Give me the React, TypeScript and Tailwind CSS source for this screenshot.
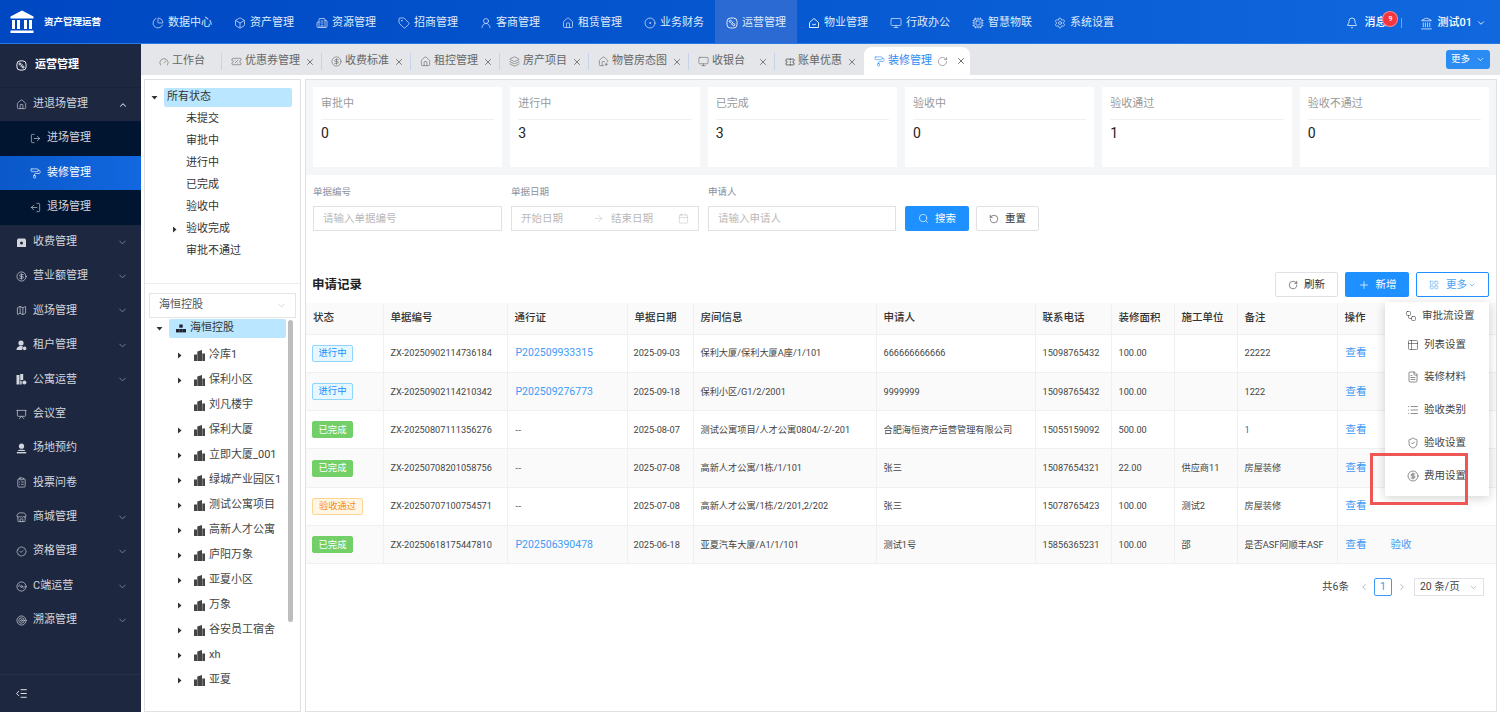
import React from "react";
import {
  ChartPie, Box, Building2, Tag, UserRound, House, CircleDot, Monitor, Cpu, Settings,
  Bell, Landmark, ChevronDown, ChevronUp, X, Gauge, TicketPercent, CircleDollarSign, Layers, HousePlus,
  Ticket, PaintRoller, RotateCw, Calendar, Search, RotateCcw, Plus, LayoutGrid, Workflow, Table2, FileText,
  List, ShieldCheck, CircleDollarSign as Coin, ChevronLeft, ChevronRight, LogOut, Map,
  Presentation, ClipboardList, Store, BadgeCheck, Disc3, Target, IndentDecrease, ArrowRight,
} from "lucide-react";

const Ops = ({ size = 12 }: { size?: number; strokeWidth?: number }) => (
  <svg width={size} height={size} viewBox="0 0 12 12" fill="none" stroke="currentColor" strokeWidth="1" className="shrink-0">
    <rect x="1" y="1" width="10" height="10" rx="3.5" />
    <circle cx="4.3" cy="4.3" r="1.1" /><circle cx="7.7" cy="7.7" r="1.1" /><path d="M5.2 7.6 L7 4.6" />
  </svg>
);
const Prop = ({ size = 12 }: { size?: number; strokeWidth?: number }) => (
  <svg width={size} height={size} viewBox="0 0 12 12" fill="none" stroke="currentColor" strokeWidth="1" className="shrink-0">
    <path d="M1.5 5.5 L6 1.5 L10.5 5.5 V10.5 H1.5 Z" strokeLinejoin="round" /><path d="M4 7 Q6 9 8 7" />
  </svg>
);
const Wallet = ({ size = 11 }: { size?: number; strokeWidth?: number }) => (
  <svg width={size} height={size} viewBox="0 0 11 11" className="shrink-0 fill-current">
    <path fillRule="evenodd" d="M2 1.5h7l1 1.5V9.5a.5.5 0 0 1-.5.5h-8a.5.5 0 0 1-.5-.5V3zM5.5 4.5a1.5 1.5 0 1 0 0 3 1.5 1.5 0 0 0 0-3z" />
  </svg>
);
const Person = ({ size = 11 }: { size?: number; strokeWidth?: number }) => (
  <svg width={size} height={size} viewBox="0 0 11 11" className="shrink-0 fill-current">
    <circle cx="5" cy="3" r="2.6" /><path d="M0.5 10 C0.5 7 3 6 5 6 C6 6 6.5 6.2 7 6.5 L6 10Z" /><circle cx="8.6" cy="8.4" r="1.8" />
  </svg>
);
const Flats = ({ size = 11 }: { size?: number; strokeWidth?: number }) => (
  <svg width={size} height={size} viewBox="0 0 11 11" className="shrink-0 fill-current">
    <path d="M0.5 1h3v9.5h-3zM4.2 0h3v6h-3zM4.2 6.8h1.5v3.7H4.2z" /><circle cx="8.4" cy="8.4" r="2" />
  </svg>
);
const Venue = ({ size = 11 }: { size?: number; strokeWidth?: number }) => (
  <svg width={size} height={size} viewBox="0 0 11 11" className="shrink-0 fill-current">
    <circle cx="5.5" cy="3.2" r="2.6" /><path d="M1.5 8 C2 6.3 9 6.3 9.5 8Z" /><rect x="0.8" y="9" width="9.4" height="1.4" />
  </svg>
);

const navs: [string, any][] = [
  ["数据中心", ChartPie], ["资产管理", Box], ["资源管理", Building2], ["招商管理", Tag], ["客商管理", UserRound], ["租赁管理", House],
  ["业务财务", CircleDot], ["运营管理", Ops], ["物业管理", Prop], ["行政办公", Monitor], ["智慧物联", Cpu], ["系统设置", Settings],
];

const tabs: [string, any, string][] = [
  ["优惠券管理", TicketPercent, "w-[100px]"], ["收费标准", CircleDollarSign, "w-[89px]"], ["租控管理", House, "w-[89px]"],
  ["房产项目", Layers, "w-[89px]"], ["物管房态图", HousePlus, "w-[100px]"], ["收银台", Monitor, "w-[86px]"],
];

const side: [string, any, boolean][] = [
  ["收费管理", Wallet, true], ["营业额管理", CircleDollarSign, true], ["巡场管理", Map, true], ["租户管理", Person, true], ["公寓运营", Flats, true],
  ["会议室", Presentation, false], ["场地预约", Venue, false], ["投票问卷", ClipboardList, false], ["商城管理", Store, true], ["资格管理", BadgeCheck, true],
  ["C端运营", Disc3, true], ["溯源管理", Target, true],
];

const stats: [string, string][] = [["审批中", "0"], ["进行中", "3"], ["已完成", "3"], ["验收中", "0"], ["验收通过", "1"], ["验收不通过", "0"]];

const rows = [
  ["进行中", "ZX-20250902114736184", "P202509933315", "2025-09-03", "保利大厦/保利大厦A座/1/101", "666666666666", "15098765432", "100.00", "", "22222", false],
  ["进行中", "ZX-20250902114210342", "P202509276773", "2025-09-18", "保利小区/G1/2/2001", "9999999", "15098765432", "100.00", "", "1222", false],
  ["已完成", "ZX-20250807111356276", "--", "2025-08-07", "测试公寓项目/人才公寓0804/-2/-201", "合肥海恒资产运营管理有限公司", "15055159092", "500.00", "", "1", false],
  ["已完成", "ZX-20250708201058756", "--", "2025-07-08", "高新人才公寓/1栋/1/101", "张三", "15087654321", "22.00", "供应商11", "房屋装修", false],
  ["验收通过", "ZX-20250707100754571", "--", "2025-07-08", "高新人才公寓/1栋/2/201,2/202", "张三", "15078765423", "100.00", "测试2", "房屋装修", false],
  ["已完成", "ZX-20250618175447810", "P202506390478", "2025-06-18", "亚夏汽车大厦/A1/1/101", "测试1号", "15856365231", "100.00", "邵", "是否ASF阿顺丰ASF", true],
] as (string | boolean)[][];

const headers = ["状态", "单据编号", "通行证", "单据日期", "房间信息", "申请人", "联系电话", "装修面积", "施工单位", "备注", "操作"];

const tree = ["冷库1", "保利小区", "刘凡楼宇", "保利大厦", "立即大厦_001", "绿城产业园区1", "测试公寓项目", "高新人才公寓", "庐阳万象", "亚夏小区", "万象", "谷安员工宿舍", "xh", "亚夏"];

const menu: [string, any, string][] = [
  ["审批流设置", Workflow, "h-[27px]"], ["列表设置", Table2, "h-[31px]"], ["装修材料", FileText, "h-[33px]"],
  ["验收类别", List, "h-[33px]"], ["验收设置", ShieldCheck, "h-[33px]"], ["费用设置", Coin, "h-[33px]"],
];

const Caret = ({ down }: { down?: boolean }) => (
  <svg width="7" height="7" viewBox="0 0 7 7" className="fill-[#333] shrink-0">
    {down ? <path d="M0.5 2 L6.5 2 L3.5 5.5 Z" /> : <path d="M2 0.5 L5.5 3.5 L2 6.5 Z" />}
  </svg>
);

const Tower = () => (
  <svg width="11" height="11" viewBox="0 0 11 11" className="fill-[#444] shrink-0">
    <path d="M0 11V4.5h3V11zM3.3 11V1.5L8 0V11zM8.3 11V3.5H11V11z" />
  </svg>
);

const Logo = () => (
  <svg width="24" height="24" viewBox="0 0 24 24" className="fill-white shrink-0">
    <path d="M12 0.5 L23.5 6.5V8.5H0.5V6.5Z" />
    <rect x="2" y="10" width="3" height="9" /><rect x="7" y="10" width="3" height="9" /><rect x="14" y="10" width="3" height="9" /><rect x="19" y="10" width="3" height="9" />
    <rect x="0.5" y="20.5" width="23" height="2.5" />
  </svg>
);

function Tg({ s }: { s: string }) {
  const c = s === "进行中" ? "bg-[#e6f7ff] border-[#91d5ff] text-[#1890ff] w-[41px]"
    : s === "已完成" ? "bg-[#73d069] border-[#73d069] text-white w-[41px]"
    : "bg-[#fff7e6] border-[#ffd591] text-[#fa8c16] w-[51px]";
  return <span className={`inline-flex h-[17px] items-center justify-center rounded-[2px] border text-[9.3px] ${c}`}>{s}</span>;
}

export default function App() {
  return (
    <div className="flex h-[712px] w-[1500px] flex-col overflow-hidden bg-white text-[11px] text-[#333] font-['Roboto','Noto_Sans_CJK_SC',sans-serif]">
      <header className="flex h-[44px] shrink-0 items-center border-b border-[#2a78e4] bg-gradient-to-r from-[#0047c2] to-[#1168de] text-white">
        <div className="flex w-[141px] shrink-0 items-center gap-[10px] pl-[10px]">
          <Logo />
          <span className="pt-[2px] text-[9.5px] font-bold">资产管理运营</span>
        </div>
        <nav className="flex h-full">
          {navs.map(([n, I]) => (
            <div key={n} className={`flex w-[82px] items-center gap-[4px] pl-[11px] pt-[3px] text-[11px] text-[#dfeafa] ${n === "运营管理" ? "bg-[#2a6ad2]" : ""}`}>
              <I size={12} strokeWidth={1.4} />
              <span>{n}</span>
            </div>
          ))}
        </nav>
        <div className="ml-auto flex items-center pr-[14px] pt-[3px]">
          <Bell size={12} strokeWidth={1.5} />
          <span className="relative ml-[6px] font-medium">消息
            <span className="absolute left-[18px] top-[-4px] flex h-[16px] w-[16px] items-center justify-center rounded-full border border-white/40 bg-[#f5363f] text-[7px]">9</span>
          </span>
          <span className="ml-[15px] h-[10px] w-px bg-white/40" />
          <Landmark size={13} strokeWidth={1.3} className="ml-[18px]" />
          <span className="ml-[4px] font-medium">测试01</span>
          <ChevronDown size={10} className="ml-[4px]" />
        </div>
      </header>

      <div className="flex min-h-0 flex-1">
        <aside className="flex w-[141px] shrink-0 flex-col bg-[#1e2740] text-[11px] text-[#d3d6dd]">
          <div className="flex h-[44px] shrink-0 items-center gap-[8px] border-b border-[#1a2238] pl-[16px] font-bold text-white">
            <Ops size={11} /><span>运营管理</span>
          </div>
          <div className="flex h-[33px] shrink-0 items-center gap-[6px] pl-[16px]">
            <House size={11} strokeWidth={1.4} /><span>进退场管理</span>
            <ChevronUp size={10} strokeWidth={2.5} className="ml-auto mr-[13px]" />
          </div>
          <div className="shrink-0 bg-[#021530]">
            <div className="flex h-[35px] items-center gap-[6px] pl-[30px]"><LogOut size={11} strokeWidth={1.4} /><span>进场管理</span></div>
            <div className="flex h-[34px] items-center gap-[6px] bg-gradient-to-r from-[#0a58c9] to-[#1268e0] pl-[30px] text-white"><PaintRoller size={11} strokeWidth={1.4} /><span>装修管理</span></div>
            <div className="flex h-[35px] items-center gap-[6px] pl-[30px]"><LogOut size={11} strokeWidth={1.4} className="-scale-x-100" /><span>退场管理</span></div>
          </div>
          {side.map(([n, I, c]) => (
            <div key={n} className="flex h-[34.4px] shrink-0 items-center gap-[6px] pl-[16px]">
              <I size={11} strokeWidth={1.5} /><span>{n}</span>
              {c && <ChevronDown size={11} className="ml-auto mr-[13px] text-[#7e8596]" />}
            </div>
          ))}
          <div className="mt-auto flex h-[38px] items-center border-t border-[#262f49] pl-[15px] text-white">
            <IndentDecrease size={13} strokeWidth={1.6} />
          </div>
        </aside>

        <div className="flex min-w-0 flex-1 flex-col">
          <div className="flex h-[31px] shrink-0 items-end bg-[#e4e6e9] text-[11px] text-[#666]">
            <div className="mb-[5px] flex h-[17px] w-[81px] items-center gap-[3px] border-r border-[#c5d4e8] pl-[18px]">
              <Gauge size={10} strokeWidth={1.5} /><span>工作台</span>
            </div>
            {tabs.map(([n, I, w]) => (
              <div key={n} className={`mb-[5px] flex h-[17px] ${w} items-center gap-[3px] border-r border-[#c5d4e8] pl-[9px]`}>
                <I size={11} strokeWidth={1.3} /><span>{n}</span>
                <X size={10} className="ml-auto mr-[6px] text-[#666]" />
              </div>
            ))}
            <div className="mb-[5px] flex h-[17px] w-[89px] items-center gap-[3px] pl-[10px]">
              <Ticket size={10} strokeWidth={1.8} className="text-[#444]" /><span>账单优惠</span>
              <X size={10} className="ml-auto mr-[7px] text-[#666]" />
            </div>
            <div className="flex h-[28px] w-[106px] items-center gap-[3px] rounded-t-[8px] bg-white pl-[10px] text-[#2a8bf2]">
              <PaintRoller size={11} strokeWidth={1.3} /><span>装修管理</span>
              <RotateCw size={11} strokeWidth={1.2} className="ml-[2px] text-[#666]" />
              <X size={10} className="ml-[5px] text-[#555]" />
            </div>
            <div className="mb-[6px] ml-auto mr-[10px] flex h-[19px] w-[44px] items-center justify-center gap-[6px] self-end rounded-[3px] bg-[#2a8bf2] text-[9.5px] text-white">
              更多<ChevronDown size={9} />
            </div>
          </div>

          <div className="flex min-h-0 flex-1 gap-[4px] pl-[3px] pr-[3px] pt-[4px]">
            <section className="flex w-[157px] shrink-0 flex-col border border-[#dfe1e5] text-[11px]">
              <div className="h-[204px] shrink-0 border-b border-[#eee] pt-[6px]">
                <div className="flex h-[22px] items-center pl-[6px]">
                  <Caret down />
                  <span className="ml-[6px] flex h-[19px] w-[128px] items-center rounded-[2px] bg-[#bae7ff] pl-[3px]">所有状态</span>
                </div>
                {["未提交", "审批中", "进行中", "已完成", "验收中", "验收完成", "审批不通过"].map((t) => (
                  <div key={t} className="flex h-[22px] items-center pl-[26px]">
                    <span className="flex w-[15px]">{t === "验收完成" && <Caret />}</span>
                    <span>{t}</span>
                  </div>
                ))}
              </div>
              <div className="mx-[4px] mt-[9px] flex h-[25px] shrink-0 items-center justify-between border border-[#e3e5e8] pl-[9px] pr-[8px] text-[#555]">
                海恒控股<ChevronDown size={11} strokeWidth={1} className="text-[#aaa]" />
              </div>
              <div className="relative mt-[1px] h-[381px] shrink-0 overflow-hidden">
                <div className="flex h-[24px] items-start pl-[11px]">
                  <span className="mt-[6px] flex"><Caret down /></span>
                  <span className="ml-[6px] flex h-[19px] w-[117px] items-center gap-[4px] rounded-[2px] bg-[#bae7ff] pl-[7px]">
                    <svg width="10" height="9" viewBox="0 0 10 9" className="fill-[#223]"><rect x="3.3" y="0.5" width="3.4" height="3.2" /><rect x="0" y="5" width="3.4" height="3.4" /><rect x="3.3" y="5" width="3.4" height="3.4" /><rect x="6.6" y="5" width="3.4" height="3.4" /></svg>
                    海恒控股
                  </span>
                </div>
                {tree.map((t) => (
                  <div key={t} className="flex h-[25px] items-center pl-[31px] text-[#444]">
                    <span className="flex w-[18px]">{t !== "刘凡楼宇" && <Caret />}</span>
                    <Tower />
                    <span className="ml-[4px]">{t}</span>
                  </div>
                ))}
                <div className="absolute left-[143px] top-[1px] h-[302px] w-[5px] rounded-full bg-[#bdbdbd]" />
              </div>
            </section>

            <main className="flex min-w-0 flex-1 flex-col border border-[#dfe1e5]">
              <div className="grid h-[95px] shrink-0 grid-cols-6 gap-[8px] bg-[#f5f6f8] pb-[8px] pl-[7px] pr-[7px] pt-[7px]">
                {stats.map(([t, v]) => (
                  <div key={t} className="bg-white px-[8px] pt-[9px]">
                    <div className="border-b border-[#f0f0f0] pb-[6px] text-[11px] text-[#999]">{t}</div>
                    <div className="mt-[3px] text-[14px] text-[#222]">{v}</div>
                  </div>
                ))}
              </div>

              <div className="flex h-[97px] shrink-0 items-start gap-[9px] pl-[7px] pt-[10px] text-[10.5px]">
                <div className="w-[189px]">
                  <div className="mb-[6px] h-[15px] text-[9.5px] text-[#8a90a0]">单据编号</div>
                  <div className="flex h-[25px] items-center border border-[#dfe1e5] pl-[9px] text-[#b9b9b9]">请输入单据编号</div>
                </div>
                <div className="w-[188px]">
                  <div className="mb-[6px] h-[15px] text-[9.5px] text-[#8a90a0]">单据日期</div>
                  <div className="flex h-[25px] items-center border border-[#dfe1e5] pl-[9px] pr-[9px] text-[#b9b9b9]">
                    开始日期<ArrowRight size={11} strokeWidth={1} className="ml-[30px]" /><span className="ml-[7px]">结束日期</span><Calendar size={11} strokeWidth={1} className="ml-auto" />
                  </div>
                </div>
                <div className="w-[188px]">
                  <div className="mb-[6px] h-[15px] text-[9.5px] text-[#8a90a0]">申请人</div>
                  <div className="flex h-[25px] items-center border border-[#dfe1e5] pl-[9px] text-[#b9b9b9]">请输入申请人</div>
                </div>
                <div className="mt-[21px] flex gap-[7px]">
                  <button className="flex h-[25px] w-[64px] items-center justify-center gap-[6px] rounded-[2px] bg-[#1e90ff] text-white"><Search size={11} strokeWidth={1.4} />搜索</button>
                  <button className="flex h-[25px] w-[63px] items-center justify-center gap-[6px] rounded-[2px] border border-[#dfe1e5] text-[#333]"><RotateCcw size={10} strokeWidth={1.4} />重置</button>
                </div>
              </div>

              <div className="relative flex h-[31px] shrink-0 items-start pl-[6px] pr-[7px]">
                <span className="mt-[4px] text-[12.5px] font-bold text-[#222]">申请记录</span>
                <div className="ml-auto flex gap-[7px] text-[10.5px]">
                  <button className="flex h-[25px] w-[63px] items-center justify-center gap-[6px] rounded-[2px] border border-[#dfe1e5]"><RotateCw size={10} strokeWidth={1.4} />刷新</button>
                  <button className="flex h-[25px] w-[64px] items-center justify-center gap-[6px] rounded-[2px] bg-[#1e90ff] text-white"><Plus size={12} strokeWidth={1.4} />新增</button>
                  <button className="flex h-[25px] w-[73px] items-center justify-center gap-[4px] rounded-[2px] border border-[#1e90ff] text-[#4aa3f5]"><LayoutGrid size={10} strokeWidth={1.3} className="mr-[3px]" />更多<ChevronDown size={8} className="-ml-[3px]" /></button>
                </div>
                <div className="absolute left-[1079px] top-[30px] z-10 w-[104px] bg-white text-[10.5px] text-[#444] shadow-[0_2px_10px_rgba(0,0,0,0.18)]">
                  {menu.map(([n, I, h], i) => (
                    <div key={n} className={`flex ${h} items-center gap-[5px] ${i === 0 ? "pl-[20px]" : "pl-[22px]"}`}><I size={12} strokeWidth={1.2} />{n}</div>
                  ))}
                  <div className="h-[4px]" />
                </div>
                <div className="absolute left-[1064px] top-[181px] z-20 h-[52px] w-[98px] border-[3px] border-[#ee5555]" />
              </div>

              <table className="w-[1190px] table-fixed border-collapse text-[9.2px] text-[#444]">
                <colgroup>
                  {[77, 124, 120, 66, 183, 159, 76, 63, 63, 100, 159].map((w, i) => <col key={i} style={{ width: w }} />)}
                </colgroup>
                <thead>
                  <tr className="h-[31px] bg-[#fafafa] text-left text-[10.5px] text-[#333]">
                    {headers.map((h) => <th key={h} className="border-b border-r border-[#f0f0f0] pl-[7px] font-medium last:border-r-0">{h}</th>)}
                  </tr>
                </thead>
                <tbody>
                  {rows.map((r, i) => (
                    <tr key={i} className={`h-[38.3px] ${i % 2 ? "bg-[#fafafa]" : "bg-white"}`}>
                      <td className="border-b border-r border-[#f0f0f0] pl-[6px]"><Tg s={r[0] as string} /></td>
                      <td className="border-b border-r border-[#f0f0f0] pl-[7px]">{r[1]}</td>
                      <td className={`border-b border-r border-[#f0f0f0] pl-[8px] ${r[2] === "--" ? "tracking-[0.5px]" : "text-[10.5px] text-[#3f9bf5]"}`}>{r[2]}</td>
                      <td className="border-b border-r border-[#f0f0f0] pl-[6px]">{r[3]}</td>
                      <td className="truncate border-b border-r border-[#f0f0f0] pl-[7px]">{r[4]}</td>
                      <td className="border-b border-r border-[#f0f0f0] pl-[7px]">{r[5]}</td>
                      <td className="border-b border-r border-[#f0f0f0] pl-[7px]">{r[6]}</td>
                      <td className="border-b border-r border-[#f0f0f0] pl-[7px]">{r[7]}</td>
                      <td className="border-b border-r border-[#f0f0f0] pl-[7px]">{r[8]}</td>
                      <td className={`border-b border-r border-[#f0f0f0] pl-[7px] ${r[9] === "1" ? "text-[#2a6fc4]" : ""}`}>{r[9]}</td>
                      <td className="border-b border-[#f0f0f0] pl-[8px] text-[10.5px] text-[#3f9bf5]">
                        <span>查看</span>{r[10] && <span className="ml-[24px]">验收</span>}
                      </td>
                    </tr>
                  ))}
                </tbody>
              </table>

              <div className="flex items-center pl-[1016px] pt-[14px] text-[10.5px] text-[#444]">
                <span>共6条</span>
                <ChevronLeft size={10} className="ml-[10px] text-[#aaa]" />
                <span className="ml-[5px] flex h-[18px] w-[18px] items-center justify-center rounded-[2px] border border-[#3f9bf5] text-[#3f9bf5]">1</span>
                <ChevronRight size={10} className="ml-[5px] text-[#aaa]" />
                <span className="ml-[7px] flex h-[18px] w-[70px] items-center justify-between border border-[#dfe1e5] pl-[5px] pr-[5px]">20 条/页<ChevronDown size={9} className="text-[#aaa]" /></span>
              </div>
            </main>
          </div>
        </div>
      </div>
    </div>
  );
}
